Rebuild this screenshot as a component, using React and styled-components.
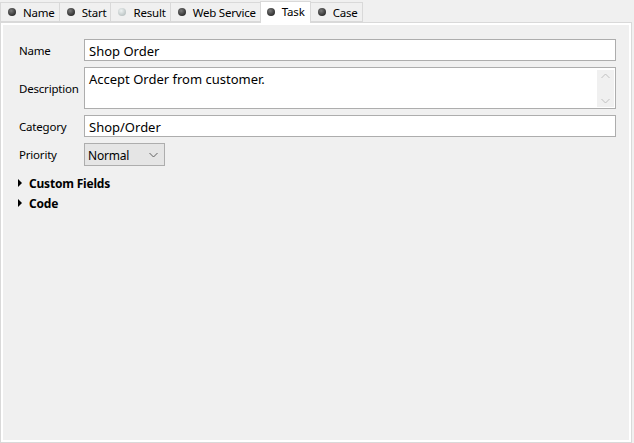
import React from 'react'
import styled, { createGlobalStyle } from 'styled-components'

const Global = createGlobalStyle`
  html, body { margin: 0; padding: 0; background: #f0f0f0; }
  body { font-family: "Noto Sans", "Open Sans", sans-serif; font-size: 12px; color: #000; }
`

const Window = styled.div`
  width: 634px;
  height: 443px;
  display: flex;
  flex-direction: column;
  box-sizing: border-box;
  padding: 0 2px 0 0;
`

const TabBar = styled.div`
  display: flex;
  align-items: flex-end;
  height: 22px;
  position: relative;
  z-index: 1;
`

const Tab = styled.div`
  box-sizing: border-box;
  height: ${p => (p.$active ? '22px' : '20px')};
  margin-bottom: ${p => (p.$active ? '-1px' : '0')};
  padding: ${p => (p.$active ? '0 5px 2px 6px' : '0 4px 0 7px')};
  display: flex;
  align-items: center;
  gap: 7px;
  background: ${p => (p.$active ? '#ffffff' : '#f0f0f0')};
  border: 1px solid #d9d9d9;
  border-bottom: ${p => (p.$active ? 'none' : '1px solid #d9d9d9')};
  margin-left: -1px;
  font-size: 11.5px;
  letter-spacing: -0.2px;
  white-space: nowrap;
  &:first-child { margin-left: 0; }
`

const Dot = styled.span`
  width: 8px;
  height: 8px;
  border-radius: 50%;
  background: ${p => (p.$dim
    ? 'radial-gradient(circle at 40% 35%, #eef2f2, #a9b3b3)'
    : 'radial-gradient(circle at 40% 35%, #7a7a7a, #111111)')};
  flex: none;
`

const Pane = styled.div`
  flex: 1;
  border: 1px solid #d9d9d9;
  background: #f0f0f0;
  box-shadow: inset 0 0 0 2px #ffffff;
  padding: 16px 15px 0 18px;
  box-sizing: border-box;
`

const Form = styled.div`
  display: grid;
  grid-template-columns: 65px 1fr;
  row-gap: 6px;
  align-items: center;
`

const Label = styled.label`
  font-size: 11.5px;
  letter-spacing: -0.2px;
  line-height: 16px;
  padding-top: 1px;
`

const TextInput = styled.div`
  box-sizing: border-box;
  height: ${p => p.$h || 22}px;
  background: #fff;
  border: 1px solid #adadad;
  padding: 2px 4px 0 4px;
  font-size: 13px;
  line-height: 18px;
  display: flex;
  justify-content: space-between;
`

const Scroll = styled.div`
  width: 17px;
  margin: 0 -3px 1px 0;
  background: #f0f0f0;
  display: flex;
  flex-direction: column;
  justify-content: space-between;
  align-items: center;
  padding: 3px 0;
  box-sizing: border-box;
`

const Select = styled.div`
  box-sizing: border-box;
  width: 81px;
  height: 23px;
  background: #e5e5e5;
  border: 1px solid #adadad;
  padding: 1px 6px 0 3px;
  display: flex;
  align-items: center;
  justify-content: space-between;
  font-size: 12px;
  letter-spacing: -0.2px;
`

const Sections = styled.div`
  margin-top: 7px;
  margin-left: -1px;
  display: flex;
  flex-direction: column;
`

const Section = styled.div`
  height: 20px;
  display: flex;
  align-items: center;
  gap: 7px;
  font-weight: 700;
  font-size: 12px;
  letter-spacing: -0.2px;
`

const Arrow = styled.span`
  width: 0;
  height: 0;
  border-top: 4px solid transparent;
  border-bottom: 4px solid transparent;
  border-left: 4px solid #000;
`

const Chevron = ({ up, color = '#a0a0a0' }) => (
  <svg width="9" height="6" viewBox="0 0 9 6">
    <path d={up ? 'M0.5 5 L4.5 1 L8.5 5' : 'M0.5 1 L4.5 5 L8.5 1'} fill="none" stroke={color} strokeWidth="1" />
  </svg>
)

const tabs = [
  { name: 'Name' },
  { name: 'Start' },
  { name: 'Result', dim: true },
  { name: 'Web Service' },
  { name: 'Task', active: true },
  { name: 'Case' },
]

export default function App() {
  return (
    <Window>
      <Global />
      <TabBar>
        {tabs.map(t => (
          <Tab key={t.name} $active={t.active}>
            <Dot $dim={t.dim} />
            {t.name}
          </Tab>
        ))}
      </TabBar>
      <Pane>
        <Form>
          <Label>Name</Label>
          <TextInput>Shop Order</TextInput>
          <Label>Description</Label>
          <TextInput $h={42}>
            <span>Accept Order from customer.</span>
            <Scroll>
              <Chevron up color="#c0c0c0" />
              <Chevron color="#c0c0c0" />
            </Scroll>
          </TextInput>
          <Label>Category</Label>
          <TextInput>Shop/Order</TextInput>
          <Label>Priority</Label>
          <div>
            <Select>
              Normal
              <Chevron color="#606060" />
            </Select>
          </div>
        </Form>
        <Sections>
          <Section><Arrow />Custom Fields</Section>
          <Section><Arrow />Code</Section>
        </Sections>
      </Pane>
    </Window>
  )
}
